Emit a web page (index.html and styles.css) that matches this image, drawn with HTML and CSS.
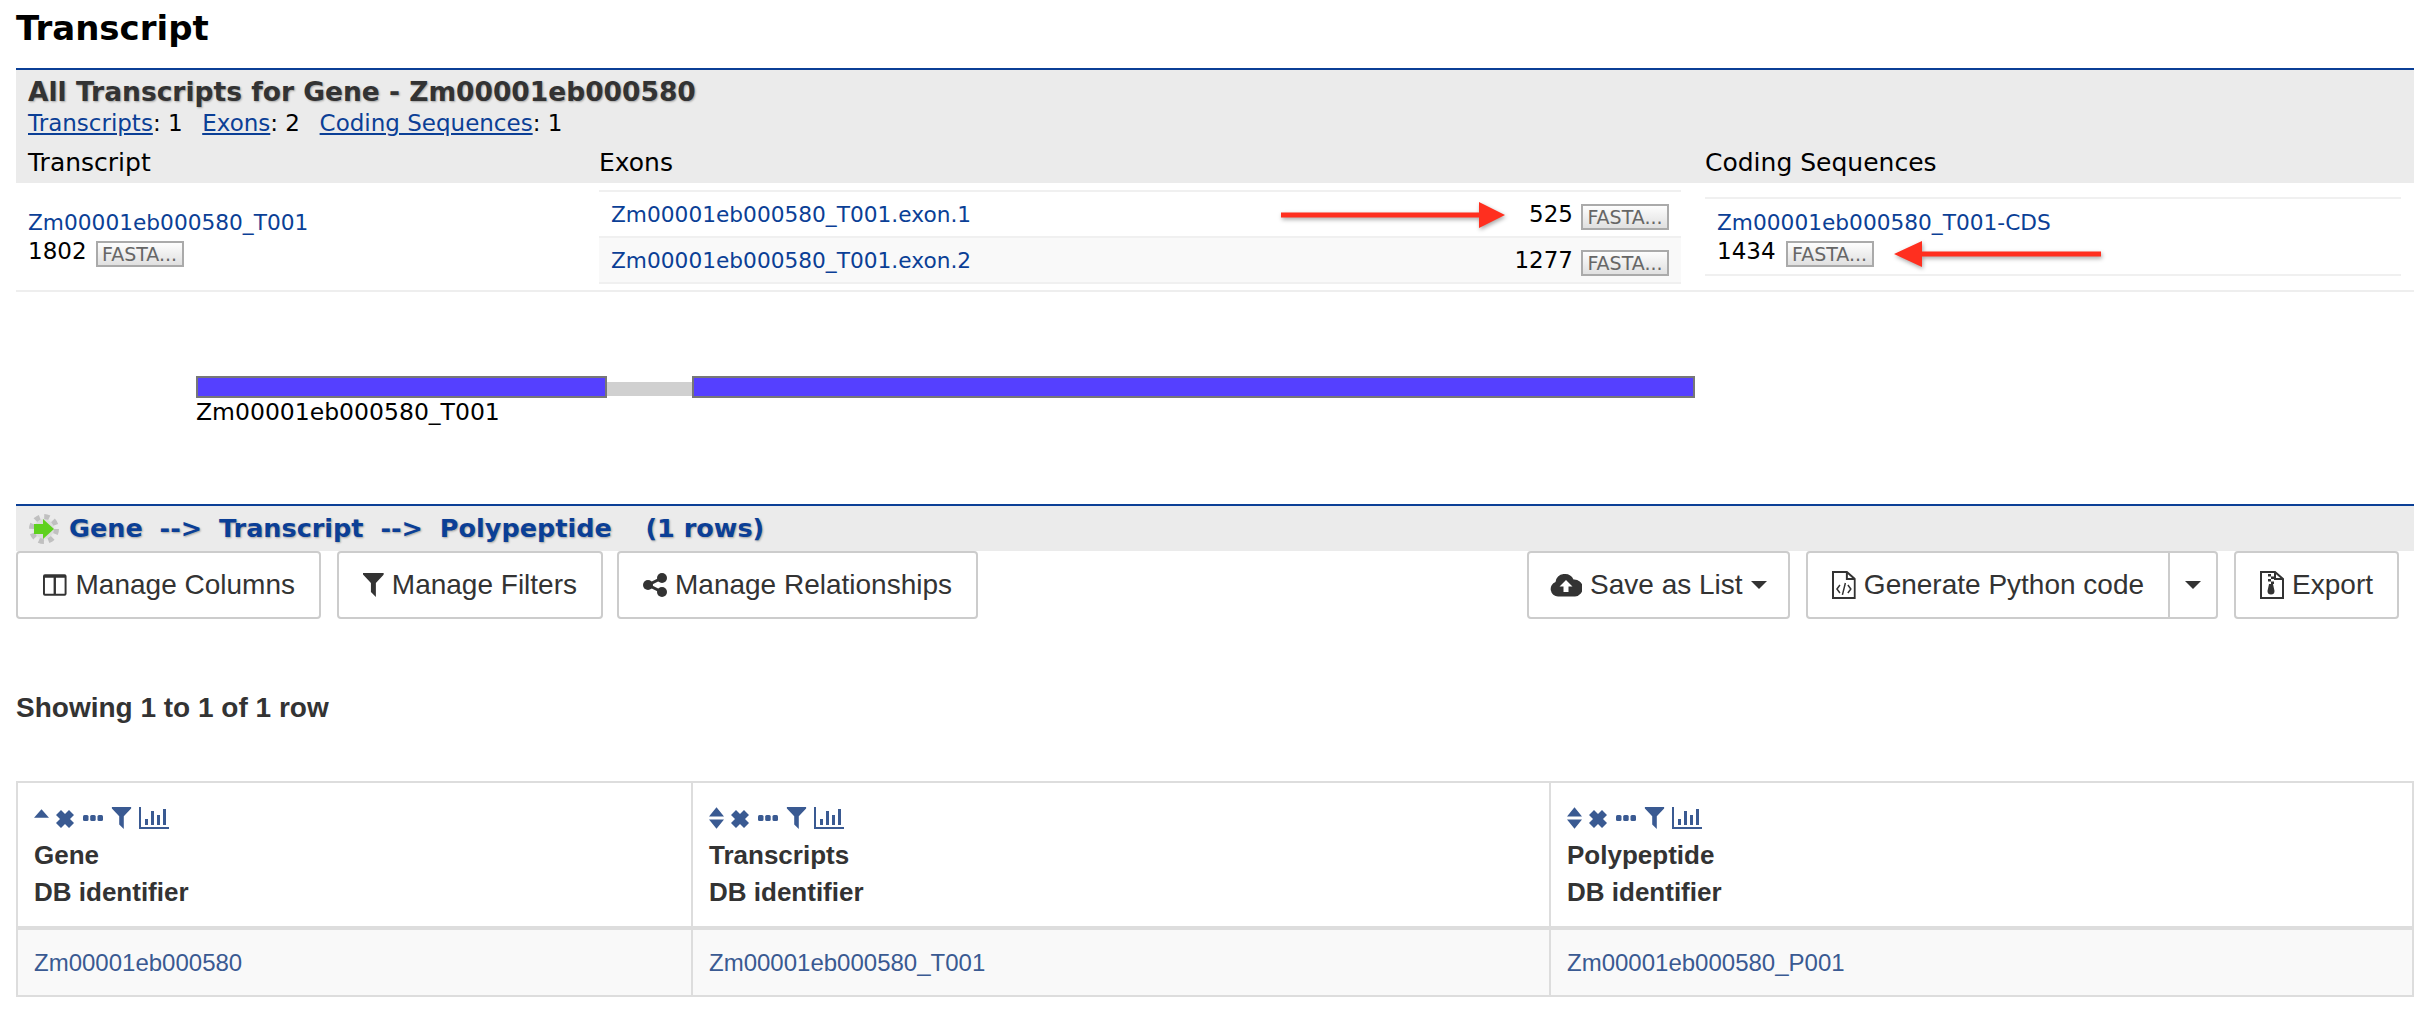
FILE: index.html
```html
<!DOCTYPE html>
<html lang="en">

<head>
    <meta charset="UTF-8">
    <title>Transcript</title>
    <link rel="stylesheet" href="styles.css">
</head>

<body>

    <svg class="defs" width="0" height="0">
        <symbol id="i-columns" viewBox="0 0 26 24">
            <path d="M3 1h20a2 2 0 0 1 2 2v18a2 2 0 0 1-2 2H3a2 2 0 0 1-2-2V3a2 2 0 0 1 2-2zM3 4.500V21h8.800V4.500zM14.200 4.500V21H23V4.500z" fill="currentColor" fill-rule="evenodd"/>
        </symbol>
        <symbol id="i-filter" viewBox="0 0 21 24">
            <path d="M0 0h21v1.500L13 10v14l-5-5v-9L0 1.500z" fill="currentColor"/>
        </symbol>
        <symbol id="i-share" viewBox="0 0 24 24">
            <circle cx="19" cy="5" r="5" fill="currentColor"/>
            <circle cx="5" cy="12" r="5" fill="currentColor"/>
            <circle cx="19" cy="19" r="5" fill="currentColor"/>
            <path d="M19 5 5 12l14 7" fill="none" stroke="currentColor" stroke-width="3"/>
        </symbol>
        <symbol id="i-cloud" viewBox="0 0 32 24">
            <path d="M8 23.500a7.500 7.500 0 0 1-2.500-14.500A9.500 9.500 0 0 1 23.500 6.500 8.500 8.500 0 0 1 25 23.500z" fill="currentColor"/>
            <path d="M16 7l6.500 6.500h-4V19h-5v-5.500h-4z" fill="#fff"/>
        </symbol>
        <symbol id="i-code" viewBox="0 0 24 28">
            <path d="M1 1h14l8 7v19H1zM15 1v7h8" fill="none" stroke="currentColor" stroke-width="2"/>
            <path d="M8 14l-3 4 3 4M16 14l3 4-3 4M13.500 12l-3 12" fill="none" stroke="currentColor" stroke-width="1.500"/>
        </symbol>
        <symbol id="i-zip" viewBox="0 0 24 28">
            <path d="M1 1h14l8 7v19H1zM15 1v7h8" fill="none" stroke="currentColor" stroke-width="2"/>
            <path d="M8 3h3v2.500H8zM11 5.500h3V8h-3zM8 8h3v2.500H8zM11 10.500h3V13h-3z" fill="currentColor"/>
            <path d="M9 13h4l1.500 7a3.500 3.500 0 1 1-7 0z" fill="currentColor"/>
        </symbol>
        <symbol id="i-up" viewBox="0 0 16 9">
            <path d="M8 0l8 9H0z" fill="currentColor"/>
        </symbol>
        <symbol id="i-sort" viewBox="0 0 16 23">
            <path d="M8 0l8 10H0zM0 13h16L8 23z" fill="currentColor"/>
        </symbol>
        <symbol id="i-times" viewBox="0 0 18 18">
            <path d="M5 0l4 4 4-4 5 5-4 4 4 4-5 5-4-4-4 4-5-5 4-4-4-4z" fill="currentColor"/>
        </symbol>
        <symbol id="i-dots" viewBox="0 0 20 6">
            <rect width="5.500" height="6" rx="1.500" fill="currentColor"/>
            <rect x="7.200" width="5.500" height="6" rx="1.500" fill="currentColor"/>
            <rect x="14.500" width="5.500" height="6" rx="1.500" fill="currentColor"/>
        </symbol>
        <symbol id="i-bars" viewBox="0 0 30 22">
            <path d="M0 0h2v20h28v2H0zM6 12h3v6H6zM12 4h3v14h-3zM18 8h3v10h-3zM24 2h3v16h-3z" fill="currentColor"/>
        </symbol>
    </svg>

    <div id="page">
        <h1 class="page-title">Transcript</h1>

        <div class="section-head summary-head">
            <h2>All Transcripts for Gene - Zm00001eb000580</h2>
            <p class="counts">
                <a href="#">Transcripts</a>: 1&nbsp; <a href="#">Exons</a>: 2&nbsp; <a href="#">Coding Sequences</a>: 1
            </p>
            <div class="trio trio-head">
                <div class="first">Transcript</div>
                <div>Exons</div>
                <div>Coding Sequences</div>
            </div>
        </div>

        <div class="trio trio-body">
            <div class="first">
                <a href="#">Zm00001eb000580_T001</a>
                <div class="size-line">1802 <span class="fasta">FASTA...</span></div>
            </div>
            <div class="exon-table">
                <div class="exon-row">
                    <a href="#">Zm00001eb000580_T001.exon.1</a>
                    <span class="exon-size">525</span>
                    <span class="fasta">FASTA...</span>
                </div>
                <div class="exon-row odd">
                    <a href="#">Zm00001eb000580_T001.exon.2</a>
                    <span class="exon-size">1277</span>
                    <span class="fasta">FASTA...</span>
                </div>
            </div>
            <div class="cds-table">
                <a href="#">Zm00001eb000580_T001-CDS</a>
                <div class="size-line">1434 <span class="fasta">FASTA...</span></div>
            </div>
        </div>

        <!-- Gene model -->
        <div class="track">
            <div class="track-bars">
                <div class="exon exon-a"></div>
                <div class="intron"></div>
                <div class="exon exon-b"></div>
            </div>
            <div class="track-label">Zm00001eb000580_T001</div>
        </div>

        <div class="section-head results-head">
            <svg class="gear" width="32" height="32" viewBox="0 0 32 32">
                <circle cx="16" cy="16" r="12" fill="#e8e8e8" stroke="#c0c0c0" stroke-width="6" stroke-dasharray="5 4.400"/>
                <circle cx="16" cy="16" r="10" fill="#dcdcdc"/>
                <path d="M6 11h9V6l11 10-11 10v-5H6z" fill="#5fd11e"/>
            </svg>
            <h2>Gene --&gt; Transcript --&gt; Polypeptide&nbsp; <span class="row-total">(1 rows)</span></h2>
        </div>

        <div class="toolbar">
            <button class="btn btn-cols"><svg class="ic-columns"><use href="#i-columns"/></svg>Manage Columns</button>
            <button class="btn btn-filters"><svg class="ic-filter"><use href="#i-filter"/></svg>Manage Filters</button>
            <button class="btn"><svg class="ic-share"><use href="#i-share"/></svg>Manage Relationships</button>

            <button class="btn btn-save"><svg class="ic-cloud"><use href="#i-cloud"/></svg>Save as List<span class="caret"></span></button>
            <div class="btn-group">
                <button class="btn"><svg class="ic-file"><use href="#i-code"/></svg>Generate Python code</button>
                <button class="btn btn-drop"><span class="caret"></span></button>
            </div>
            <button class="btn"><svg class="ic-file"><use href="#i-zip"/></svg>Export</button>
        </div>

        <div class="row-count">Showing 1 to 1 of 1 row</div>

        <table class="results">
            <thead>
                <tr>
                    <th class="col-a">
                        <div class="col-tools">
                            <svg class="t-up"><use href="#i-up"/></svg>
                            <svg class="t-times"><use href="#i-times"/></svg>
                            <svg class="t-dots"><use href="#i-dots"/></svg>
                            <svg class="t-filter"><use href="#i-filter"/></svg>
                            <svg class="t-bars"><use href="#i-bars"/></svg>
                        </div>
                        Gene<br>DB identifier
                    </th>
                    <th class="col-b">
                        <div class="col-tools">
                            <svg class="t-sort"><use href="#i-sort"/></svg>
                            <svg class="t-times"><use href="#i-times"/></svg>
                            <svg class="t-dots"><use href="#i-dots"/></svg>
                            <svg class="t-filter"><use href="#i-filter"/></svg>
                            <svg class="t-bars"><use href="#i-bars"/></svg>
                        </div>
                        Transcripts<br>DB identifier
                    </th>
                    <th class="col-c">
                        <div class="col-tools">
                            <svg class="t-sort"><use href="#i-sort"/></svg>
                            <svg class="t-times"><use href="#i-times"/></svg>
                            <svg class="t-dots"><use href="#i-dots"/></svg>
                            <svg class="t-filter"><use href="#i-filter"/></svg>
                            <svg class="t-bars"><use href="#i-bars"/></svg>
                        </div>
                        Polypeptide<br>DB identifier
                    </th>
                </tr>
            </thead>
            <tbody>
                <tr>
                    <td><a href="#">Zm00001eb000580</a></td>
                    <td><a href="#">Zm00001eb000580_T001</a></td>
                    <td><a href="#">Zm00001eb000580_P001</a></td>
                </tr>
            </tbody>
        </table>

        <!-- Red annotation arrows drawn over the page -->
        <svg class="arrow arrow-one" width="232" height="36" viewBox="0 0 232 36">
            <path d="M2 15.500h198V5l26 13-26 13V20.500H2z" fill="#ff2f1f"/>
        </svg>
        <svg class="arrow arrow-two" width="216" height="36" viewBox="0 0 216 36">
            <path d="M211 15.500H32V5L4 18l28 13V20.500h179z" fill="#ff2f1f"/>
        </svg>
    </div>

</body>

</html>
```

FILE: styles.css
```css
body {
    margin: 0;
    font-family: "DejaVu Sans", sans-serif;
    background: #fff;
    color: #000;
}

.defs {
    position: absolute;
}

#page {
    position: relative;
    padding: 0 16px;
    width: 2398px;
    height: 1020px;
    overflow: hidden;
}

a {
    color: #0b3f96;
    text-decoration: none;
}

.page-title {
    margin: 0;
    height: 68px;
    font-size: 34px;
    line-height: 56px;
    font-weight: bold;
}

.section-head {
    border-top: 2px solid #0b3f96;
    background: #ebebeb;
}

.section-head h2 {
    margin: 0;
    font-size: 26.500px;
    font-weight: bold;
    color: #333;
    text-shadow: 1px 1px 2px rgba(0, 0, 0, .3);
}

.summary-head {
    padding-top: 7px;
    height: 106px;
}

.summary-head h2 {
    padding-left: 12px;
    line-height: 30px;
}

.counts {
    margin: 3px 0 0;
    padding-left: 12px;
    font-size: 23px;
    line-height: 26px;
}

.counts a {
    margin-left: 5px;
    text-decoration: underline;
}

.counts a:first-child {
    margin-left: 0;
}

/* Three columns shared by the head and the body */
.trio {
    display: grid;
    grid-template-columns: 583px 1106px 696px;
}

.trio .first {
    padding-left: 12px;
}

.trio-head {
    margin-top: 10px;
    font-size: 25px;
    line-height: 34px;
}

.trio-body {
    height: 107px;
    align-items: center;
    font-size: 21.700px;
    border-bottom: 2px solid #eee;
}

.trio-body a {
    position: relative;
    top: 1px;
}

.size-line {
    display: flex;
    align-items: center;
    gap: 9px;
    margin-top: 3px;
    height: 28px;
    font-size: 23px;
}

.fasta {
    display: inline-block;
    box-sizing: border-box;
    width: 88px;
    height: 26px;
    margin-top: 7px;
    border: 2px solid #aaa;
    background: linear-gradient(#fdfdfd, #e0e0e0);
    color: #666;
    font-size: 19px;
    line-height: 22px;
    text-align: center;
    white-space: nowrap;
    overflow: hidden;
}

.exon-table {
    width: 1082px;
    border-top: 2px solid #f0f0f0;
}

.exon-row {
    display: flex;
    align-items: center;
    height: 44px;
    padding: 0 12px;
    border-bottom: 2px solid #f0f0f0;
}

.exon-row.odd {
    background: #f9f9f9;
}

.exon-size {
    margin-left: auto;
    margin-right: 8px;
    font-size: 23px;
}

.cds-table {
    width: 672px;
    height: 75px;
    padding: 0 12px;
    border-top: 2px solid #f0f0f0;
    border-bottom: 2px solid #f0f0f0;
    display: flex;
    flex-direction: column;
    justify-content: center;
}

.cds-table .size-line {
    gap: 10px;
}

.track {
    margin-top: 84px;
    padding-left: 180px;
    height: 128px;
}

.track-bars {
    display: flex;
    align-items: flex-start;
}

.exon {
    box-sizing: border-box;
    height: 22px;
    background: #5540ff;
    border: 2px solid #777;
}

.exon-a {
    width: 411px;
}

.exon-b {
    width: 1003px;
}

.intron {
    width: 85px;
    height: 14px;
    margin-top: 6px;
    background: #d0d0d0;
}

.track-label {
    font-size: 23.500px;
    line-height: 28px;
}

.results-head {
    display: flex;
    align-items: center;
    gap: 9px;
    height: 45px;
    padding-left: 12px;
}

.section-head.results-head h2 {
    padding-bottom: 2px;
    color: #0b3f96;
    font-size: 25.500px;
    word-spacing: 8px;
}

.row-total {
    word-spacing: 0;
}

.gear {
    filter: blur(.6px);
}

.toolbar {
    display: flex;
    gap: 16px;
    padding-right: 15px;
}

.btn {
    display: flex;
    align-items: center;
    gap: 8px;
    box-sizing: border-box;
    height: 68px;
    padding: 12px 24px;
    border: 2px solid #ccc;
    border-radius: 4px;
    background: #fff;
    color: #333;
    font-family: "Liberation Sans", Arial, sans-serif;
    font-size: 28px;
    line-height: 40px;
    white-space: nowrap;
}

.btn-cols {
    width: 305px;
}

.btn-filters {
    width: 266px;
    margin-right: -2px;
}

.btn-save {
    margin-left: auto;
    width: 263px;
    padding: 12px 21px;
}

.btn-group {
    display: flex;
}

.btn-group .btn:first-child {
    border-radius: 4px 0 0 4px;
    width: 364px;
}

.btn-drop {
    width: 50px;
    margin-left: -2px;
    padding: 0;
    justify-content: center;
    border-radius: 0 4px 4px 0;
}

.caret {
    display: inline-block;
    width: 0;
    height: 0;
    border-top: 8px solid #333;
    border-left: 8px solid transparent;
    border-right: 8px solid transparent;
}

.ic-columns {
    width: 26px;
    height: 24px;
}

.ic-filter {
    width: 21px;
    height: 24px;
}

.ic-share {
    width: 24px;
    height: 24px;
}

.ic-cloud {
    width: 32px;
    height: 24px;
}

.ic-file {
    width: 24px;
    height: 28px;
}

.row-count {
    margin-top: 73px;
    height: 91px;
    font-family: "Liberation Sans", Arial, sans-serif;
    font-size: 28px;
    line-height: 32px;
    font-weight: bold;
    color: #333;
}

.results {
    width: 2398px;
    table-layout: fixed;
    border-collapse: collapse;
    margin-top: -2px;
    font-family: "Liberation Sans", Arial, sans-serif;
    font-size: 24px;
    color: #333;
}

.results th,
.results td {
    border: 2px solid #ddd;
    padding: 16px;
    text-align: left;
}

.results th {
    padding-bottom: 15px;
    font-size: 26px;
    line-height: 37px;
    border-bottom-width: 4px;
}

.results td {
    background: #f9f9f9;
    padding-bottom: 15px;
    line-height: 34px;
}

.results a {
    color: #3a5a92;
}

.col-a {
    width: 641px;
}

.col-b {
    width: 824px;
}

.col-tools {
    display: flex;
    align-items: center;
    gap: 8px;
    height: 38px;
    color: #3a5a92;
}

.t-up {
    width: 15px;
    height: 9px;
    margin-bottom: 10px;
}

.t-sort {
    width: 15px;
    height: 22px;
}

.t-times {
    width: 18px;
    height: 18px;
    margin-left: -1px;
    margin-top: 2px;
}

.t-dots {
    width: 20px;
    height: 6px;
    margin-left: 1px;
}

.t-filter {
    width: 21px;
    height: 22px;
}

.t-bars {
    width: 30px;
    height: 22px;
    margin-left: -1px;
}

/* Annotations */
.arrow {
    position: absolute;
    filter: drop-shadow(1px 2px 2px rgba(0, 0, 0, .35));
}

.arrow-one {
    left: 1279px;
    top: 197px;
}

.arrow-two {
    left: 1890px;
    top: 236px;
}
```
